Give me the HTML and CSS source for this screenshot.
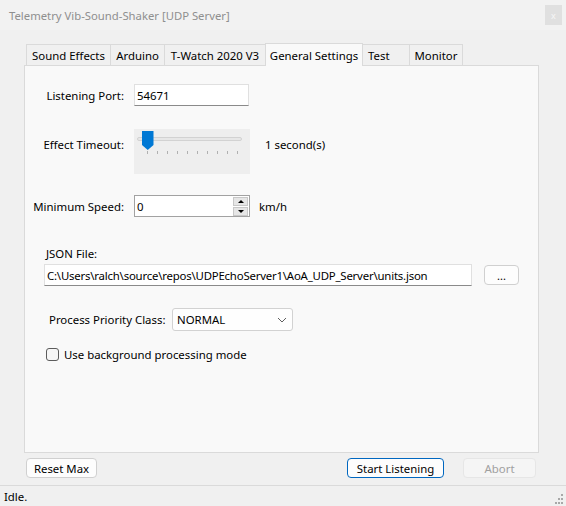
FILE: index.html
```html
<!DOCTYPE html>
<html>
<head>
<meta charset="utf-8">
<link rel="stylesheet" href="styles.css">
</head>
<body>
<div class="window">
  <div class="titlebar">
    <span class="title">Telemetry Vib-Sound-Shaker [UDP Server]</span>
    <span class="close">x</span>
  </div>
  <div class="client">
    <div class="tabs">
      <div class="tab tab-se">Sound Effects</div>
      <div class="tab tab-ard">Arduino</div>
      <div class="tab tab-tw">T-Watch 2020 V3</div>
      <div class="tab tab-gs active">General Settings</div>
      <div class="tab tab-test">Test</div>
      <div class="tab tab-mon last">Monitor</div>
    </div>
    <div class="panel">
      <div class="row row-port">
        <span class="lbl">Listening Port:</span>
        <div class="textbox port">54671</div>
      </div>
      <div class="row row-timeout">
        <span class="lbl">Effect Timeout:</span>
        <div class="slider">
          <div class="track"></div>
          <svg class="thumb" width="12" height="19" viewBox="0 0 12 19"><polygon points="0,0 11.5,0 11.5,14 5.75,19 0,14" fill="#0078d4"/></svg>
          <div class="ticks">
            <i></i><i></i><i></i><i></i><i></i><i></i><i></i><i></i><i></i><i></i>
          </div>
        </div>
        <span class="after">1 second(s)</span>
      </div>
      <div class="row row-speed">
        <span class="lbl">Minimum Speed:</span>
        <div class="numeric">
          <span class="num-val">0</span>
          <div class="spin">
            <span class="spin-btn"><i class="arr-up"></i></span>
            <span class="spin-btn"><i class="arr-down"></i></span>
          </div>
        </div>
        <span class="unit">km/h</span>
      </div>
      <div class="json-label">JSON File:</div>
      <div class="json-row">
        <div class="textbox path">C:\Users\ralch\source\repos\UDPEchoServer1\AoA_UDP_Server\units.json</div>
        <div class="btn browse">...</div>
      </div>
      <div class="priority-row">
        <span class="plbl">Process Priority Class:</span>
        <div class="combo">
          <span>NORMAL</span>
          <svg class="chev" width="10" height="6" viewBox="0 0 10 6"><polyline points="1,1 5,5 9,1" fill="none" stroke="#5f5f5f" stroke-width="1"/></svg>
        </div>
      </div>
      <div class="check-row">
        <span class="checkbox"></span>
        <span class="check-lbl">Use background processing mode</span>
      </div>
    </div>
    <div class="actions">
      <div class="btn reset">Reset Max</div>
      <div class="btn start">Start Listening</div>
      <div class="btn abort">Abort</div>
    </div>
  </div>
  <div class="status">
    <span class="status-text">Idle.</span>
    <svg class="grip" width="12" height="12" viewBox="0 0 12 12">
      <rect x="9" y="1" width="2" height="2" fill="#a8a8a8"/>
      <rect x="6" y="5" width="2" height="2" fill="#a8a8a8"/>
      <rect x="9" y="5" width="2" height="2" fill="#a8a8a8"/>
      <rect x="3" y="9" width="2" height="2" fill="#a8a8a8"/>
      <rect x="6" y="9" width="2" height="2" fill="#a8a8a8"/>
      <rect x="9" y="9" width="2" height="2" fill="#a8a8a8"/>
    </svg>
  </div>
</div>
</body>
</html>
```

FILE: styles.css
```css
html, body {
  margin: 0;
  padding: 0;
  background: #f0f0f0;
  overflow: hidden;
}

.window {
  width: 566px;
  height: 506px;
  display: flex;
  flex-direction: column;
  font-family: "Noto Sans", "Liberation Sans", sans-serif;
  font-size: 11.4px;
  line-height: 15px;
  color: #000;
  background: #f0f0f0;
}

.titlebar {
  height: 30px;
  flex: none;
  display: flex;
  align-items: center;
  justify-content: space-between;
  padding-left: 9px;
  background: #f2f2f2;
}

.title {
  color: #8f8f8f;
  font-size: 11.3px;
}

.close {
  width: 17px;
  height: 20px;
  margin-right: 4px;
  background: #e0e0e0;
  color: #f7f7f7;
  font-size: 9px;
  display: flex;
  align-items: center;
  justify-content: center;
}

.client {
  flex: none;
  padding-top: 13px;
}

.tabs {
  display: flex;
  align-items: flex-end;
  height: 22px;
  margin-left: 26px;
}

.tab {
  box-sizing: border-box;
  height: 21px;
  border: 1px solid #dadada;
  border-right: none;
  border-bottom: none;
  background: #f0f0f0;
  display: flex;
  align-items: center;
  justify-content: center;
  white-space: nowrap;
}

.tab.last {
  border-right: 1px solid #dadada;
}

.tab.active {
  height: 23px;
  margin-bottom: -1px;
  border-right: 1px solid #dadada;
  background: #f9f9f9;
  position: relative;
  z-index: 2;
}

.tab.active + .tab {
  border-left: none;
}

.tab-se { width: 84px; }
.tab-ard { width: 54px; }
.tab-tw { width: 101px; }
.tab-gs { width: 98px; }
.tab-test { width: 46px; justify-content: flex-start; padding-left: 5px; }
.tab-mon { width: 54px; }

.panel {
  box-sizing: border-box;
  margin-left: 24px;
  width: 515px;
  height: 388px;
  border: 1px solid #dadada;
  background: #f9f9f9;
  position: relative;
  z-index: 1;
}

.row {
  display: flex;
}

.lbl {
  width: 99px;
  margin-right: 10px;
  text-align: right;
  white-space: nowrap;
}

.row-port {
  margin-top: 18px;
  align-items: center;
  height: 22px;
}

.textbox {
  box-sizing: border-box;
  height: 22px;
  background: #fff;
  border: 1px solid #e0e0e0;
  border-bottom-color: #8a8a8a;
  padding-left: 2px;
  display: flex;
  align-items: center;
  white-space: nowrap;
  overflow: hidden;
}

.port {
  width: 115px;
}

.row-timeout {
  margin-top: 23px;
  align-items: flex-start;
}

.row-timeout .lbl {
  margin-top: 8px;
}

.slider {
  box-sizing: border-box;
  width: 116px;
  height: 45px;
  background: #eeeeee;
  padding: 8px 8px 0 3px;
  position: relative;
}

.track {
  box-sizing: border-box;
  height: 4px;
  background: #e7e7e7;
  border: 1px solid #d2d2d2;
  border-radius: 2px;
}

.thumb {
  position: absolute;
  left: 8px;
  top: 2px;
}

.ticks {
  display: flex;
  justify-content: space-between;
  width: 91px;
  height: 3px;
  margin: 10px 0 0 10px;
}

.ticks i {
  width: 1px;
  height: 3px;
  background: #b0b0b0;
}

.after {
  margin-top: 8px;
  margin-left: 15px;
}

.row-speed {
  margin-top: 21px;
  align-items: center;
  height: 22px;
}

.numeric {
  box-sizing: border-box;
  width: 116px;
  height: 22px;
  background: #fff;
  border: 1px solid #a2a2a2;
  display: flex;
  align-items: center;
  padding: 0 1px 0 2px;
}

.num-val {
  flex: 1;
}

.spin {
  display: flex;
  flex-direction: column;
  width: 15px;
  height: 19px;
  gap: 1px;
}

.spin-btn {
  box-sizing: border-box;
  flex: 1;
  background: #e6e6e6;
  border: 1px solid #c8c8c8;
  display: flex;
  align-items: center;
  justify-content: center;
}

.arr-up {
  width: 0;
  height: 0;
  border-left: 3px solid transparent;
  border-right: 3px solid transparent;
  border-bottom: 3px solid #000;
}

.arr-down {
  width: 0;
  height: 0;
  border-left: 3px solid transparent;
  border-right: 3px solid transparent;
  border-top: 3px solid #000;
}

.unit {
  margin-left: 9px;
}

.json-label {
  margin-top: 29px;
  padding-left: 21px;
}

.json-row {
  margin-top: 3px;
  padding-left: 19px;
  display: flex;
  align-items: center;
}

.path {
  width: 428px;
  letter-spacing: -0.2px;
}

.btn {
  box-sizing: border-box;
  height: 20px;
  background: #fdfdfd;
  border: 1px solid #d0d0d0;
  border-radius: 4px;
  display: flex;
  align-items: center;
  justify-content: center;
  white-space: nowrap;
}

.browse {
  width: 35px;
  margin-left: 12px;
  font-size: 11px;
}

.priority-row {
  margin-top: 22px;
  padding-left: 24px;
  display: flex;
  align-items: center;
}

.plbl {
  width: 123px;
  white-space: nowrap;
}

.combo {
  box-sizing: border-box;
  width: 121px;
  height: 23px;
  background: #fefefe;
  border: 1px solid #d2d2d2;
  border-radius: 3px;
  display: flex;
  align-items: center;
  justify-content: space-between;
  padding: 0 5px 0 4px;
}

.check-row {
  margin-top: 16px;
  padding-left: 21px;
  height: 15px;
  display: flex;
  align-items: center;
}

.checkbox {
  box-sizing: border-box;
  width: 13px;
  height: 13px;
  border: 1px solid #5c5c5c;
  border-radius: 3px;
  background: #f6f6f6;
  margin-right: 5px;
}

.actions {
  display: flex;
  margin-top: 5px;
  padding: 0 30px 0 26px;
  height: 20px;
}

.reset {
  width: 71px;
}

.start {
  width: 97px;
  margin-left: auto;
  border-color: #0067c0;
}

.abort {
  width: 73px;
  margin-left: 19px;
  background: #f5f5f5;
  border-color: #e6e6e6;
  color: #a0a0a0;
}

.status {
  box-sizing: border-box;
  margin-top: 7px;
  height: 21px;
  flex: none;
  border-top: 1px solid #dadada;
  display: flex;
  align-items: center;
  padding-left: 4px;
}

.grip {
  margin-left: auto;
  margin-right: 2px;
  align-self: flex-end;
  margin-bottom: 1px;
}
```
